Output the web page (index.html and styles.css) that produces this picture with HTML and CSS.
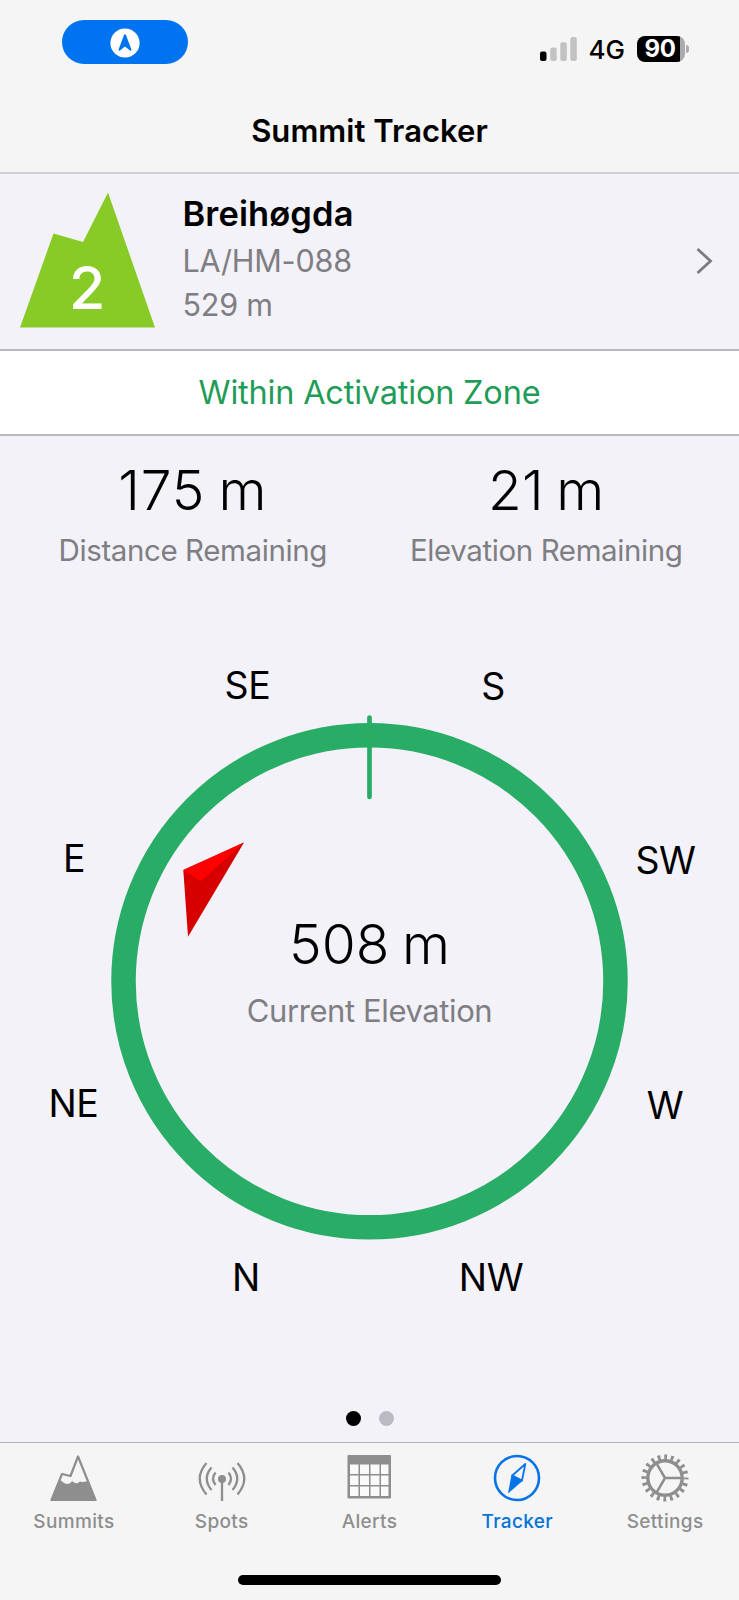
FILE: index.html
```html
<!DOCTYPE html>
<html lang="en">
<head>
<meta charset="utf-8">
<title>Summit Tracker</title>
<link rel="stylesheet" href="styles.css">
</head>
<body>
<div class="app">
  <header class="top">
    <div class="status">
      <div class="pill"><svg width="30" height="30" viewBox="0 0 30 30"><circle cx="15" cy="15" r="14.600" fill="#fff"/><path d="M13.900 7.300Q15 5.300 16.100 7.300L21.400 21.500Q21.500 23.300 20 22.600L15 18.400 10 22.600Q8.500 23.300 8.600 21.500Z" fill="#0074f0"/></svg></div>
      <div class="status-right">
        <svg width="37" height="24" viewBox="0 0 37 24"><rect x="0" y="14.500" width="6.500" height="9.500" rx="2"/><g fill="#c2c2c2"><rect x="10.200" y="10.500" width="6.500" height="13.500" rx="2"/><rect x="20.300" y="5.300" width="6.500" height="18.700" rx="2"/><rect x="30.300" y="0" width="6.500" height="24" rx="2"/></g></svg>
        <span class="net">4G</span>
        <div class="battery"><span class="level">90</span></div><i class="nub"></i>
      </div>
    </div>
    <h1>Summit Tracker</h1>
  </header>

  <section class="summit">
    <svg class="badge" width="136" height="136" viewBox="0 0 136 136"><path d="M0 134.500 33.500 40.500 63 49 88 -.500 135 134.500Z" fill="#88cb26"/><text class="points" x="67.300" y="116" text-anchor="middle">2</text></svg>
    <div class="info">
      <div class="name">Breihøgda</div>
      <div class="ref">LA/HM-088</div>
      <div class="alt">529 m</div>
    </div>
    <svg class="chevron" width="18" height="28" viewBox="0 0 18 28"><path d="M2.500 2 15.500 14 2.500 26" fill="none" stroke="#7b7b80" stroke-width="2.800"/></svg>
  </section>

  <div class="zone">Within Activation Zone</div>

  <section class="stats">
    <div class="stat"><div class="big wide">175 m</div><div class="cap">Distance Remaining</div></div>
    <div class="stat"><div class="big">21 m</div><div class="cap">Elevation Remaining</div></div>
  </section>

  <svg class="compass" width="739" height="760" viewBox="0 600 739 760">
    <circle cx="369.500" cy="981.300" r="246" fill="none" stroke="#29ad66" stroke-width="24.500"/>
    <path d="M369.500 717.500V797" stroke="#29ad66" stroke-width="4.700" stroke-linecap="round"/>
    <path d="M244 842.500 183.300 870 188 936.700Z" fill="#d60000"/>
    <path d="M244 842.500 183.300 870 200.500 881.300Z" fill="#f00"/>
    <g class="dir" text-anchor="middle">
      <text x="247.500" y="699">SE</text><text x="493" y="700">S</text>
      <text x="74" y="871.500">E</text><text x="665.500" y="873.500">SW</text>
      <text x="73.500" y="1116.500">NE</text><text x="665" y="1118.500">W</text>
      <text x="246" y="1290.500">N</text><text x="491" y="1291">NW</text>
    </g>
    <text class="elev" x="369.500" y="963.500" text-anchor="middle">508 m</text>
    <text class="elev-label" x="369.500" y="1021.500" text-anchor="middle">Current Elevation</text>
  </svg>

  <div class="pager"><i class="on"></i><i></i></div>

  <nav class="tabs">
    <a class="tab"><svg width="48" height="48" viewBox="0 0 48 48"><path d="M1.500 46 12 20 20.500 22 28 2.500 45.500 46Z" fill="none" stroke="#8e8e8e" stroke-width="2.200" stroke-linejoin="round"/><path d="M.5 47 10.500 26Q13.500 29.500 17 30 20.500 30 22 27 25 30 28 29 30 26.500 32 28 35 28 37.500 27L46.500 47Z" fill="#8e8e8e"/></svg><span>Summits</span></a>
    <a class="tab"><svg width="48" height="48" viewBox="0 0 48 48" fill="none" stroke="#8e8e8e" stroke-width="2.300"><path d="M24 25V47"/><circle cx="24" cy="25" r="4" fill="#8e8e8e" stroke="none"/><path d="M17.500 18.500Q12.500 25 17.500 31M30.500 18.500Q35.500 25 30.500 31M13.500 13.500Q4 24.500 13.500 36M34.500 13.500Q44 24.500 34.500 36M8.500 9Q-5 24.500 8.500 40.500M39.500 9Q53 24.500 39.500 40.500"/></svg><span>Spots</span></a>
    <a class="tab"><svg width="48" height="48" viewBox="0 0 48 48"><rect x="2.500" y="1" width="43.500" height="43.500" rx="1" fill="#8e8e8e"/><path fill="#fafafa" d="M5 10.500h8.500v9.500H5zM15 10.500h9v9.500h-9zM25.500 10.500h9v9.500h-9zM36 10.500h7.500v9.500H36zM5 21.500h8.500v9.500H5zM15 21.500h9v9.500h-9zM25.500 21.500h9v9.500h-9zM36 21.500h7.500v9.500H36zM5 32.500h8.500v9.500H5zM15 32.500h9v9.500h-9zM25.500 32.500h9v9.500h-9zM36 32.500h7.500v9.500H36z"/></svg><span>Alerts</span></a>
    <a class="tab active"><svg width="48" height="48" viewBox="0 0 48 48"><g fill="none" stroke="#0673e8" stroke-width="2.600"><circle cx="24" cy="24" r="22"/><path d="M32.300 10 19.300 21.500 29 26.500Z" stroke-width="1.800" stroke-linejoin="round"/></g><path d="M18.500 20.500 30 26.500 15 39.500Z" fill="#0673e8"/></svg><span>Tracker</span></a>
    <a class="tab"><svg width="48" height="48" viewBox="0 0 48 48" fill="none" stroke="#8e8e8e"><circle cx="24" cy="24" r="17.200" stroke-width="3.400"/><circle cx="24" cy="24" r="21" stroke-width="5" stroke-dasharray="2.800 3.798" stroke-dashoffset="1.400"/><path d="M24 24H41M24 24 15.500 9.300M24 24 15.500 38.700" stroke-width="2.500"/></svg><span>Settings</span></a>
  </nav>
  <div class="home"><i></i></div>
</div>
</body>
</html>
```
FILE: styles.css
```css
* { box-sizing: border-box; }
body { margin: 0; background: #f3f2f9; font-family: Inter, "Liberation Sans", sans-serif; color: #000; }
.app { width: 739px; height: 1600px; display: flex; flex-direction: column; overflow: hidden; }
.top { height: 174px; background: #f5f5f5; border-bottom: 2px solid #d0d0d4; flex: none; }
.status { display: flex; justify-content: space-between; padding: 20px 50px 0 62px; height: 100px; }
.pill { width: 126px; height: 44px; border-radius: 22px; background: #0074f0; display: flex; align-items: center; justify-content: center; padding-top: 1px; }
.status-right { display: flex; height: 26px; margin-top: 16px; align-items: center; }
.net { font-size: 26px; font-weight: 500; margin-left: 11.500px; width: 48.500px; letter-spacing: 0; line-height: 26px; position: relative; top: 1px; }
.battery { width: 48px; height: 26px; border-radius: 8px; background: linear-gradient(90deg, #000 43px, #ababab 43px); }
.level { display: block; width: 46px; text-align: center; color: #fff; font-weight: 700; font-size: 24px; line-height: 26px; letter-spacing: -.5px; }
.nub { width: 3px; height: 8px; background: #ababab; border-radius: 0 4px 4px 0; margin-left: 1px; }
h1 { margin: 0; text-align: center; font-size: 31px; font-weight: 600; line-height: 62px; letter-spacing: .05px; }
.summit { height: 177px; flex: none; border-bottom: 2px solid #b9b9bf; display: flex; padding: 19px 26px 0 20px; }
.badge { flex: none; overflow: visible; }
.points { font-size: 59px; font-weight: 500; fill: #fff; }
.info { margin-left: 26.500px; flex: 1; }
.info div { white-space: nowrap; }
.name { font-size: 34.500px; font-weight: 600; line-height: 41px; letter-spacing: .1px; }
.ref, .alt { font-size: 30.500px; font-weight: 400; line-height: 44px; color: #7e7e83; letter-spacing: -.2px; }
.ref { margin-top: 5px; }
.chevron { margin-top: 54px; flex: none; }
.zone { height: 85px; flex: none; background: #fff; border-bottom: 2px solid #b9b9bf; text-align: center; color: #1f9d58; font-size: 32.500px; letter-spacing: -.2px; line-height: 84px; }
.stats { display: flex; flex: none; height: 164px; padding: 23px 16px 0 16px; }
.stat { flex: 1; text-align: center; }
.big, .elev { font-size: 55px; font-weight: 300; letter-spacing: .1px; word-spacing: -3px; }
.big { line-height: 62px; }
.wide { letter-spacing: .8px; }
.cap { font-size: 29.500px; font-weight: 400; line-height: 40px; margin-top: 9px; color: #7e7e83; white-space: nowrap; letter-spacing: -.4px; }
.compass { display: block; flex: none; }
.dir { font-size: 37.500px; font-weight: 400; letter-spacing: -.4px; }
.elev-label { font-size: 31px; font-weight: 400; fill: #7e7e83; letter-spacing: -.4px; }
.pager { height: 82px; flex: none; display: flex; justify-content: center; gap: 18px; padding-top: 51px; }
.pager i { width: 15px; height: 15px; border-radius: 50%; background: #bbbac2; }
.pager .on { background: #000; }
.tabs { flex: none; height: 106px; background: #f5f5f5; border-top: 1px solid #b2b2b8; display: grid; grid-template-columns: repeat(5, 1fr); padding-top: 11px; }
.tab { display: flex; flex-direction: column; align-items: center; font-size: 19px; font-weight: 500; color: #8e8e8e; letter-spacing: .35px; }
.tab span { line-height: 24px; margin-top: 8px; }
.tab.active { color: #0673d8; }
.home { flex: 1; background: #f5f5f5; display: flex; justify-content: center; padding-top: 27px; }
.home i { width: 263px; height: 10px; border-radius: 5px; background: #000; }
```
